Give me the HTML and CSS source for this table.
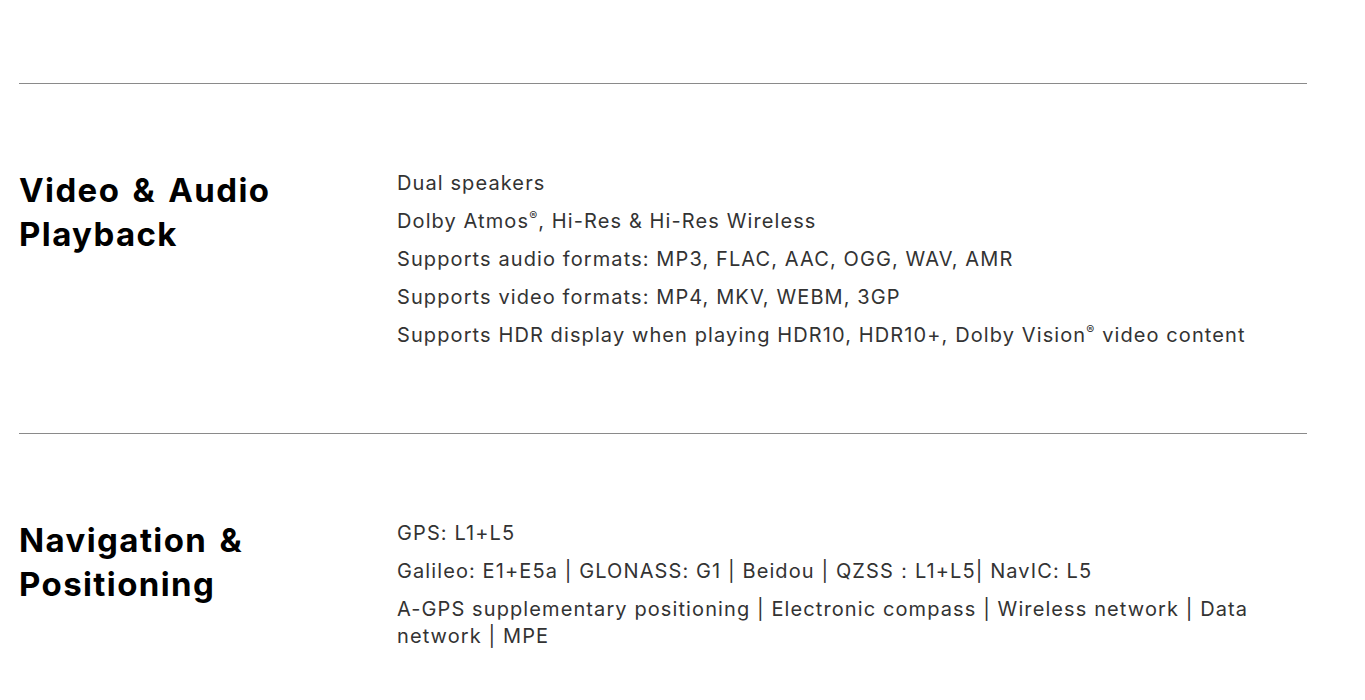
FILE: index.html
```html
<!DOCTYPE html>
<html lang="en">
<head>
<meta charset="utf-8">
<title>Specs</title>
<link rel="stylesheet" href="styles.css">
</head>
<body>
<main class="specs">
  <section class="spec">
    <h2 class="spec-title">Video &amp; Audio<br>Playback</h2>
    <ul class="spec-list">
      <li>Dual speakers</li>
      <li>Dolby Atmos<sup>®</sup>, Hi-Res &amp; Hi-Res Wireless</li>
      <li>Supports audio formats: MP3, FLAC, AAC, OGG, WAV, AMR</li>
      <li>Supports video formats: MP4, MKV, WEBM, 3GP</li>
      <li>Supports HDR display when playing HDR10, HDR10+, Dolby Vision<sup>®</sup> video content</li>
    </ul>
  </section>
  <section class="spec">
    <h2 class="spec-title">Navigation &amp;<br>Positioning</h2>
    <ul class="spec-list">
      <li>GPS: L1+L5</li>
      <li>Galileo: E1+E5a | GLONASS: G1 | Beidou | QZSS：L1+L5| NavIC: L5</li>
      <li>A-GPS supplementary positioning | Electronic compass | Wireless network | Data network | MPE</li>
    </ul>
  </section>
</main>
</body>
</html>
```

FILE: styles.css
```css
html, body {
  margin: 0;
  padding: 0;
  background: #ffffff;
}

.specs {
  width: 1288px;
  margin: 0 0 0 19px;
  padding-top: 83px;
}

.spec {
  display: grid;
  grid-template-columns: 378px 1fr;
  border-top: 1px solid #8a8a8a;
  padding: 84px 0 84px;
}

.spec-title {
  margin: 0;
  font-family: Inter, "Noto Sans", sans-serif;
  font-weight: 700;
  font-size: 33px;
  line-height: 44px;
  color: #000;
  letter-spacing: 1.4px;
  word-spacing: 3px;
}

.spec-list {
  list-style: none;
  margin: 2px 0 0;
  padding: 0;
  display: flex;
  flex-direction: column;
  gap: 11px;
  font-family: Inter, "Noto Sans", sans-serif;
  font-size: 20px;
  line-height: 27px;
  color: #333;
  letter-spacing: 1.1px;
}

.spec-list sup {
  font-size: 0.6em;
  line-height: 0;
  vertical-align: 0.7em;
}
```
